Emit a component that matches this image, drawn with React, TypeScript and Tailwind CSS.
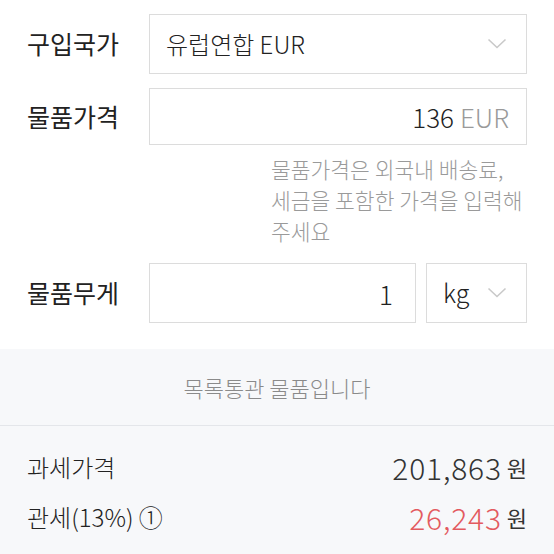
const font = { fontFamily: '"Noto Sans CJK KR", "Noto Sans", sans-serif' };

const Chevron = () => (
  <svg width="20" height="12" viewBox="0 0 20 12" fill="none" className="shrink-0">
    <polyline points="1.5,1.5 10,9.5 18.5,1.5" stroke="#c9c9c9" strokeWidth="1.6" />
  </svg>
);

export default function App() {
  return (
    <div className="h-[554px] w-[554px] overflow-hidden bg-white text-[#222]" style={font}>
      <div className="flex flex-col px-[27px] pt-[14px]">
        <div className="flex items-center">
          <div className="w-[122px] text-[25px]">구입국가</div>
          <div className="flex h-[60px] flex-1 items-center justify-between border border-[#dcdcdc] pl-[16px] pr-[19px]">
            <span className="text-[24px] font-light">유럽연합 EUR</span>
            <Chevron />
          </div>
        </div>

        <div className="mt-[14px] flex items-center">
          <div className="w-[122px] text-[25px]">물품가격</div>
          <div className="flex h-[57px] flex-1 items-center justify-end border border-[#dcdcdc] pr-[17px] text-[26px] font-light">
            <span className="text-[#222]">136</span>
            <span className="ml-[6px] text-[#9a9a9a]">EUR</span>
          </div>
        </div>

        <div className="mt-[8px] pl-[244px] text-[21.5px] font-light leading-[31px] text-[#9a9a9a] whitespace-nowrap">
          물품가격은 외국내 배송료,
          <br />
          세금을 포함한 가격을 입력해
          <br />
          주세요
        </div>

        <div className="mt-[17px] flex items-center">
          <div className="w-[122px] text-[25px]">물품무게</div>
          <div className="flex h-[60px] flex-1 items-center justify-end border border-[#dcdcdc] pr-[22px] text-[26px] font-light">
            1
          </div>
          <div className="ml-[10px] flex h-[60px] w-[101px] items-center justify-between border border-[#dcdcdc] pl-[16px] pr-[19px]">
            <span className="text-[25px] font-light">kg</span>
            <Chevron />
          </div>
        </div>
      </div>

      <div className="mt-[26px] bg-[#f7f8fa]">
        <div className="flex h-[77px] items-center justify-center border-b border-[#e4e6ea] text-[22px] font-light text-[#8a8a8a]">
          목록통관 물품입니다
        </div>
        <div className="flex flex-col px-[27px] pt-[16px] pb-10">
          <div className="flex h-[50px] items-center justify-between">
            <span className="text-[24px] font-light">과세가격</span>
            <span className="flex items-center text-[30px] font-light tracking-[0.8px] text-[#333]">
              201,863
              <span className="ml-[5px] text-[22px] font-normal tracking-normal">원</span>
            </span>
          </div>
          <div className="flex h-[50px] items-center justify-between">
            <span className="text-[24px] font-light">관세(13%) ①</span>
            <span className="flex items-center text-[30px] font-light tracking-[0.8px] text-[#e35a5f]">
              26,243
              <span className="ml-[5px] text-[22px] font-normal tracking-normal text-[#333]">원</span>
            </span>
          </div>
        </div>
      </div>
    </div>
  );
}
